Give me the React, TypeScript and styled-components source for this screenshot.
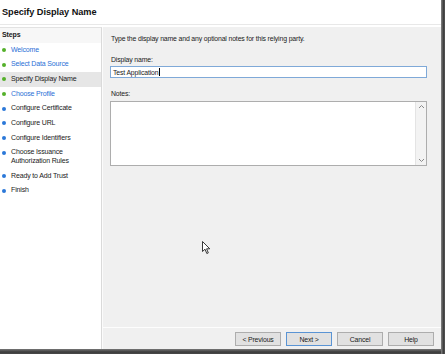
import React from 'react';
import styled, { createGlobalStyle } from 'styled-components';

const GlobalStyle = createGlobalStyle`
  html, body {
    margin: 0;
    padding: 0;
    background: #ffffff;
  }
  * {
    box-sizing: border-box;
  }
`;

const Frame = styled.div`
  position: relative;
  width: 445px;
  height: 354px;
  display: grid;
  grid-template-columns: 1fr 4px;
  grid-template-rows: 1fr 5px;
  font-family: 'Liberation Sans', Arial, sans-serif;
  color: #1a1a1a;
`;

const RightEdge = styled.div`
  grid-column: 2;
  grid-row: 1 / 3;
  background: linear-gradient(to right, #858585, #3e3e3e 60%, #555555);
`;

const BottomEdge = styled.div`
  grid-column: 1;
  grid-row: 2;
  background: linear-gradient(to bottom, #777777, #3c3c3c 60%, #4a4a4a);
`;

const Window = styled.div`
  grid-column: 1;
  grid-row: 1;
  display: flex;
  flex-direction: column;
  background: #ffffff;
  min-height: 0;
`;

const Header = styled.div`
  height: 25px;
  display: flex;
  align-items: center;
  padding: 0 0 1px 2px;
  border-bottom: 1px solid #e8e8e8;
`;

const Title = styled.h1`
  margin: 0;
  font-size: 9.2px;
  font-weight: bold;
  letter-spacing: -0.05px;
  color: #111;
`;

const Body = styled.div`
  flex: 1;
  display: flex;
  margin-top: 2px;
  min-height: 0;
`;

const Sidebar = styled.div`
  width: 102px;
  background: #ffffff;
  border-top: 1px solid #e2e2e2;
  border-right: 1px solid #dadada;
`;

const StepsHeader = styled.div`
  height: 14.5px;
  display: flex;
  align-items: center;
  padding: 0 0 1px 2px;
  font-size: 7px;
  font-weight: bold;
  letter-spacing: -0.1px;
  background: #f7f7f7;
`;

const StepItem = styled.div<{ $active?: boolean }>`
  display: flex;
  align-items: flex-start;
  padding: 3.1px 0 3.1px 2px;
  background: ${p => (p.$active ? '#e6e6e6' : 'transparent')};
`;

const Dot = styled.span<{ $done: boolean }>`
  flex: none;
  width: 4px;
  height: 4px;
  border-radius: 50%;
  margin: 2.3px 5px 0 0;
  background: ${p => (p.$done ? '#54b02a' : '#2b78d8')};
`;

const StepLabel = styled.span<{ $link: boolean }>`
  font-size: 7px;
  line-height: 8.5px;
  letter-spacing: -0.15px;
  color: ${p => (p.$link ? '#2a6fd6' : '#1a1a1a')};
`;

const Content = styled.div`
  flex: 1;
  display: flex;
  flex-direction: column;
  background: #f0f0f0;
  border-left: 1px solid #fbfbfb;
`;

const Main = styled.div`
  flex: 1;
  padding: 7px 14px 0 7px;
  display: flex;
  flex-direction: column;
`;

const Description = styled.p`
  margin: 0;
  padding-left: 1px;
  font-size: 6.9px;
  line-height: 9px;
  letter-spacing: -0.15px;
`;

const FieldLabel = styled.label<{ $gap: number }>`
  display: block;
  margin-top: ${p => p.$gap}px;
  padding-left: 1px;
  font-size: 6.9px;
  line-height: 9px;
  letter-spacing: -0.15px;
`;

const TextInput = styled.div`
  margin-top: 2px;
  height: 12px;
  background: #ffffff;
  border: 1px solid #7fa9d8;
  display: flex;
  align-items: center;
  padding-left: 2px;
  font-size: 6.9px;
  letter-spacing: -0.15px;
`;

const Caret = styled.span`
  display: inline-block;
  width: 1px;
  height: 8px;
  background: #000;
  margin-left: 0.5px;
`;

const TextArea = styled.div`
  margin-top: 2.5px;
  height: 65px;
  background: #ffffff;
  border: 1px solid #adadad;
  display: flex;
  justify-content: flex-end;
`;

const ScrollBar = styled.div`
  width: 11px;
  background: #f3f3f3;
  border-left: 1px solid #e4e4e4;
  display: flex;
  flex-direction: column;
  justify-content: space-between;
  align-items: center;
  padding: 2px 0;
`;

const Footer = styled.div`
  height: 22px;
  border-top: 1px solid #fdfdfd;
  display: flex;
  justify-content: flex-end;
  align-items: flex-start;
  gap: 5px;
  padding: 4px 7px 0 0;
`;

const Button = styled.button<{ $default?: boolean }>`
  width: 46px;
  height: 14px;
  padding: 0;
  font-family: 'Liberation Sans', Arial, sans-serif;
  font-size: 6.9px;
  letter-spacing: -0.15px;
  color: #1a1a1a;
  background: #e1e1e1;
  border: 1px solid ${p => (p.$default ? '#5a94d4' : '#adadad')};
  border-radius: 0;
`;

const Pointer = styled.svg`
  position: absolute;
  left: 202px;
  top: 241px;
`;

const steps = [
  { label: 'Welcome', done: true, link: true },
  { label: 'Select Data Source', done: true, link: true },
  { label: 'Specify Display Name', done: true, link: false, active: true },
  { label: 'Choose Profile', done: true, link: true },
  { label: 'Configure Certificate', done: false, link: false },
  { label: 'Configure URL', done: false, link: false },
  { label: 'Configure Identifiers', done: false, link: false },
  { label: 'Choose Issuance\nAuthorization Rules', done: false, link: false },
  { label: 'Ready to Add Trust', done: false, link: false },
  { label: 'Finish', done: false, link: false },
];

const Chevron = ({ up }: { up: boolean }) => (
  <svg width="7" height="5" viewBox="0 0 7 5">
    <path
      d={up ? 'M1 4 L3.5 1.5 L6 4' : 'M1 1 L3.5 3.5 L6 1'}
      fill="none"
      stroke="#8a8a8a"
      strokeWidth="1"
    />
  </svg>
);

export default function App() {
  return (
    <>
      <GlobalStyle />
      <Frame>
        <Window>
          <Header>
            <Title>Specify Display Name</Title>
          </Header>
          <Body>
            <Sidebar>
              <StepsHeader>Steps</StepsHeader>
              {steps.map(s => (
                <StepItem key={s.label} $active={s.active}>
                  <Dot $done={s.done} />
                  <StepLabel $link={s.link}>
                    {s.label.split('\n').map((line, i) => (
                      <React.Fragment key={i}>
                        {i > 0 && <br />}
                        {line}
                      </React.Fragment>
                    ))}
                  </StepLabel>
                </StepItem>
              ))}
            </Sidebar>
            <Content>
              <Main>
                <Description>
                  Type the display name and any optional notes for this relying party.
                </Description>
                <FieldLabel $gap={12}>Display name:</FieldLabel>
                <TextInput>
                  Test Application
                  <Caret />
                </TextInput>
                <FieldLabel $gap={11}>Notes:</FieldLabel>
                <TextArea>
                  <ScrollBar>
                    <Chevron up />
                    <Chevron up={false} />
                  </ScrollBar>
                </TextArea>
              </Main>
              <Footer>
                <Button>&lt; Previous</Button>
                <Button $default>Next &gt;</Button>
                <Button>Cancel</Button>
                <Button>Help</Button>
              </Footer>
            </Content>
          </Body>
        </Window>
        <RightEdge />
        <BottomEdge />
        <Pointer width="9" height="14" viewBox="0 0 9 14">
          <path
            d="M0.5 0.5 L0.5 10.5 L3 8.2 L4.8 12.5 L6.3 11.9 L4.6 7.8 L7.8 7.8 Z"
            fill="#ffffff"
            stroke="#222"
            strokeWidth="0.9"
            strokeLinejoin="round"
          />
        </Pointer>
      </Frame>
    </>
  );
}
